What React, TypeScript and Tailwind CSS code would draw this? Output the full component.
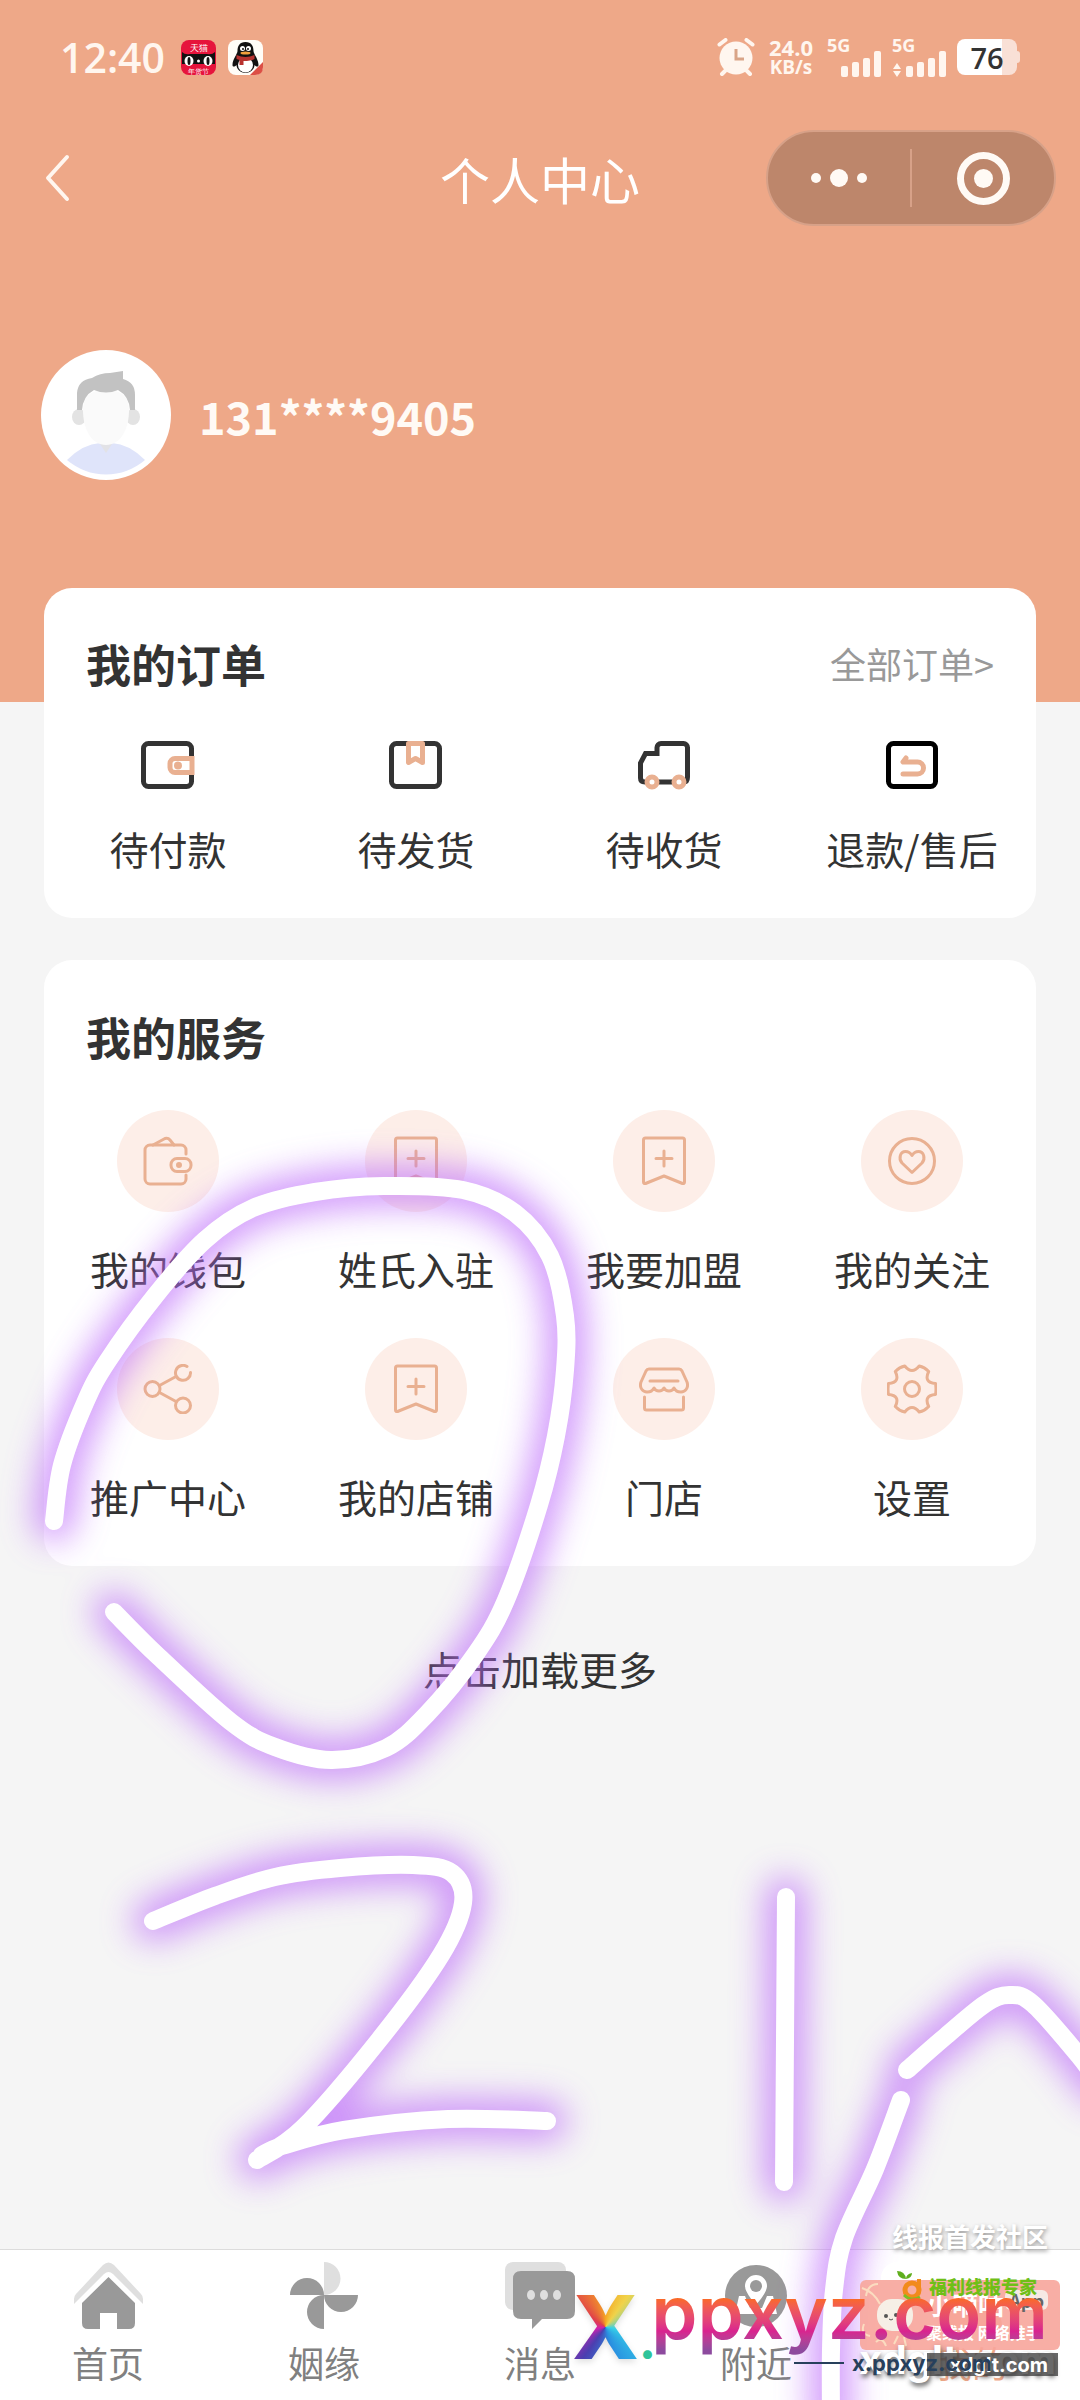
import React from "react";

interface Entry {
  label: string;
  icon: React.ReactNode;
}

const ORANGE = "#e9b091";
const DARK = "#333333";

// ---- Order icons (54x54) ----

const PayIcon = () => (
  <svg viewBox="0 0 54 54" className="size-[54px]" fill="none" strokeWidth="5" aria-hidden="true">
    <rect x="2.5" y="5.5" width="48" height="43" rx="5" stroke={DARK} />
    <path d="M51 20.5H34a5 5 0 0 0-5 5v4a5 5 0 0 0 5 5h17z" stroke={ORANGE} fill="#fff" />
    <circle cx="37" cy="27.5" r="4" fill={ORANGE} />
  </svg>
);

const ShipIcon = () => (
  <svg viewBox="0 0 54 54" className="size-[54px]" fill="none" strokeWidth="5" aria-hidden="true">
    <rect x="2.5" y="5.5" width="48" height="43" rx="5" stroke={DARK} />
    <path d="M19.5 5.5h14v19l-7-4-7 4z" stroke={ORANGE} fill="#fff" strokeLinejoin="round" />
  </svg>
);

const TruckIcon = () => (
  <svg viewBox="0 0 54 54" className="size-[54px]" fill="none" strokeWidth="5" aria-hidden="true">
    <path
      d="M8 44c-3 0-4.500-1.500-4.500-4V25l5-9.500H20V9.500a4 4 0 0 1 4-4h22.500a4 4 0 0 1 4 4V39c0 3.500-1.500 5-4 5z"
      stroke={DARK}
    />
    <circle cx="15" cy="44" r="5" fill="#fff" stroke={ORANGE} />
    <circle cx="42" cy="44" r="5" fill="#fff" stroke={ORANGE} />
  </svg>
);

const RefundIcon = () => (
  <svg viewBox="0 0 54 54" className="size-[54px]" fill="none" strokeWidth="5" aria-hidden="true">
    <rect x="3.500" y="5.5" width="47" height="43" rx="5" stroke="#000" />
    <path
      d="M21 20 18 24h14.500a6 6 0 0 1 0 12H18"
      stroke={ORANGE}
      strokeLinecap="round"
      strokeLinejoin="round"
    />
  </svg>
);

// ---- Service icons, drawn inside a peach disc ----

const Disc: React.FC<{ children: React.ReactNode }> = ({ children }) => (
  <span className="flex size-[102px] items-center justify-center rounded-full bg-[#fdeee8]">
    <svg
      viewBox="-1 -1 50 50"
      className="size-[50px]"
      fill="none"
      stroke={ORANGE}
      strokeWidth="3"
      strokeLinecap="round"
      strokeLinejoin="round"
      aria-hidden="true"
    >
      {children}
    </svg>
  </span>
);

const WalletIcon = () => (
  <Disc>
    <path d="M42 17v-4a5 5 0 0 0-5-5H6a5 5 0 0 0-5 5v29a5 5 0 0 0 5 5h31a5 5 0 0 0 5-5v-4" />
    <path d="m9 8 12-6.500q3-1 5 1.500l4 5" />
    <rect x="27" y="21.500" width="20" height="13" rx="6" />
    <circle cx="35" cy="28" r="1.500" />
  </Disc>
);

const BookmarkIcon = () => (
  <Disc>
    <path d="M5.500 1h37q2 0 2 2v42q0 2-2 1.500L24 39 5.500 46.500q-2 .5-2-1.500V3q0-2 2-2z" />
    <path d="M24 14v15M16 21.500h16" />
  </Disc>
);

const HeartIcon = () => (
  <Disc>
    <circle cx="24" cy="24" r="22.500" />
    <path d="M24 35.500 14 26c-4-5-1.500-11.500 3.500-11.500 3 0 5 1.500 6.500 4 1.500-2.500 3.500-4 6.500-4 5 0 7.500 6.500 3.500 11.500z" />
  </Disc>
);

const ShareIcon = () => (
  <Disc>
    <circle cx="8.500" cy="24" r="7.500" />
    <path d="M43 1.500a7.500 7.500 0 1 0 3.500 6" />
    <circle cx="39" cy="40.500" r="7.500" />
    <path d="m15.500 20.500 16.500-9M15.500 27.500l16.500 9" />
  </Disc>
);

const StoreIcon = () => (
  <Disc>
    <path d="M9 4h30q2 0 3 2l5 11c2 6-2 10-6 10s-5-1-7-4c-2 4-8 4-10 0-2 4-8 4-10 0-2 3-3 4-7 4S-1 23 1 17L6 6q1-2 3-2z" />
    <path d="M10 16h28M4.500 32v11q0 2 2 2h35q2 0 2-2V32" />
  </Disc>
);

const GearIcon = () => (
  <Disc>
    <g transform="translate(24 24)">
      <path d="M23.500-5.500Q24.500 0 23.500 5.500 11.300 6.500 16.700 17.500 12.500 22 7.200 23 0 14 -7.200 23-12.500 22-16.700 17.500-11.300 6.500-23.500 5.500-24.500 0-23.500-5.500-11.300-6.500-16.700-17.500-12.500-22-7.200-23 0-14 7.200-23 12.500-22 16.700-17.500 11.300-6.500 23.500-5.500z" />
      <circle r="7.500" />
    </g>
  </Disc>
);

// ---- Tab bar icons (72x72) ----

const HomeIcon = () => (
  <svg viewBox="0 0 72 72" className="size-18" aria-hidden="true">
    <path d="M2 42v-5q0-3 2-5L31 3q5.500-5 11 0l27 29q2 2 2 5v5L41 12q-4.500-4-9 0z" fill="#dfdfdf" />
    <path d="m36.500 15 26.500 26v20q0 6-6 6H45V51H28v16H16q-6 0-6-6V41z" fill="#999" />
  </svg>
);

const PinwheelIcon = () => (
  <svg viewBox="0 0 72 72" className="size-18" fill="#999" aria-hidden="true">
    <path d="M36 0a16.500 16.500 0 0 1 0 33z" fill="#dfdfdf" />
    <path d="M2 33a17 17 0 0 1 34 0zM36 33h34a17 17 0 0 1-34 0zM36 33v34a17 17 0 0 1 0-34z" />
  </svg>
);

const MessageIcon = () => (
  <svg viewBox="0 0 72 72" className="size-18" aria-hidden="true">
    <rect x="1" y="0" width="61" height="48" rx="8" fill="#dfdfdf" />
    <path d="M17 9h46q8 0 8 8v32q0 8-8 8H38L28 67V57H17q-8 0-8-8V17q0-8 8-8z" fill="#999" />
    <g fill="#dfdfdf">
      <ellipse cx="27" cy="33" rx="4" ry="5" />
      <ellipse cx="40" cy="33" rx="4" ry="5" />
      <ellipse cx="53" cy="33" rx="4" ry="5" />
    </g>
  </svg>
);

const NearbyIcon = () => (
  <svg viewBox="0 0 72 72" className="size-18" aria-hidden="true">
    <circle cx="36" cy="34" r="31" fill="#999" />
    <path d="M19 34h6l5 12h12l5-12h6l4 18H15z" fill="#fff" />
    <path d="M36 12a12 12 0 0 1 12 12c0 8-12 20-12 20S24 32 24 24a12 12 0 0 1 12-12z" fill="#fff" stroke="#999" strokeWidth="2" />
    <circle cx="36" cy="24" r="6" fill="#999" />
  </svg>
);

const MineIcon = () => (
  <svg viewBox="0 0 72 72" className="size-18" aria-hidden="true">
    <circle cx="36" cy="16" r="16" fill="#f6d5c5" />
    <path d="M6 66c0-20 13-30 30-30s30 10 30 30z" fill="#eea888" />
  </svg>
);

const orders: Entry[] = [
  { label: "待付款", icon: <PayIcon /> },
  { label: "待发货", icon: <ShipIcon /> },
  { label: "待收货", icon: <TruckIcon /> },
  { label: "退款/售后", icon: <RefundIcon /> },
];

const services: Entry[] = [
  { label: "我的钱包", icon: <WalletIcon /> },
  { label: "姓氏入驻", icon: <BookmarkIcon /> },
  { label: "我要加盟", icon: <BookmarkIcon /> },
  { label: "我的关注", icon: <HeartIcon /> },
  { label: "推广中心", icon: <ShareIcon /> },
  { label: "我的店铺", icon: <BookmarkIcon /> },
  { label: "门店", icon: <StoreIcon /> },
  { label: "设置", icon: <GearIcon /> },
];

const tabs: Entry[] = [
  { label: "首页", icon: <HomeIcon /> },
  { label: "姻缘", icon: <PinwheelIcon /> },
  { label: "消息", icon: <MessageIcon /> },
  { label: "附近", icon: <NearbyIcon /> },
  { label: "我的", icon: <MineIcon /> },
];

// ---- Status bar ----

const TmallIcon = () => (
  <svg viewBox="0 0 35 35" className="size-[35px]" aria-hidden="true">
    <rect width="35" height="35" rx="8" fill="#e6143c" />
    <path d="M1 12q3 3 8 2h17q5 1 8-2v12H1z" fill="#111" />
    <ellipse cx="8" cy="21" rx="4.500" ry="5" fill="#fff" />
    <ellipse cx="27" cy="21" rx="4.500" ry="5" fill="#fff" />
    <ellipse cx="8" cy="21" rx="1.500" ry="4" fill="#111" />
    <ellipse cx="27" cy="21" rx="1.500" ry="4" fill="#111" />
    <circle cx="17.500" cy="21" r="1.500" fill="#fff" />
    <text x="17.500" y="11" fontSize="9" textAnchor="middle" fill="#fff">天猫</text>
    <text x="17.500" y="34" fontSize="7" textAnchor="middle" fill="#fff">年货节</text>
  </svg>
);

const QQIcon = () => (
  <svg viewBox="0 0 35 35" className="size-[35px]" aria-hidden="true">
    <rect width="35" height="35" rx="8" fill="#fffdf8" />
    <path d="M17.500 2c6 0 8 4 8 9 0 3 5 8 5 14 0 2-2 2-4 0 0 4-4 8-9 8s-9-4-9-8c-2 2-4 2-4 0 0-6 5-11 5-14 0-5 2-9 8-9z" fill="#111" />
    <ellipse cx="17.500" cy="25" rx="7.500" ry="7.500" fill="#fff" />
    <circle cx="14.500" cy="8.500" r="2.500" fill="#fff" />
    <circle cx="20.500" cy="8.500" r="2.500" fill="#fff" />
    <circle cx="15" cy="9" r="1" fill="#111" />
    <circle cx="20" cy="9" r="1" fill="#111" />
    <ellipse cx="17.500" cy="13" rx="5" ry="1.500" fill="#f2a03c" />
    <path d="M8.500 15q9 4 18 0v4q-4 2-11 2v4h-4v-5l-3-1z" fill="#b8322f" />
    <path d="M22 35 35 22v5q0 8-8 8z" fill="#dc4f45" />
  </svg>
);

const AlarmIcon = () => (
  <svg viewBox="0 0 38 38" className="size-[38px]" fill="none" stroke="#fff6ef" strokeWidth="4" strokeLinecap="round" aria-hidden="true">
    <circle cx="19" cy="20" r="16.500" fill="#fff6ef" stroke="none" />
    <path d="m2.500 6.500 6-4.500M35.500 6.500l-6-4.500M5 36l3-3M33 36l-3-3" />
    <path d="M19 11v10h8" stroke="#d9a487" strokeWidth="3" strokeLinecap="butt" />
  </svg>
);

const Signal: React.FC<{ active?: boolean }> = ({ active }) => (
  <div className="flex h-[36px] w-[55px] flex-col justify-between">
    <span className="h-3 text-[18px] font-bold leading-3">5G</span>
    <svg viewBox="0 0 55 26" className="h-[26px] w-[55px] shrink-0" fill="#fff6ef" aria-hidden="true">
      {active && <path d="m5 12 4 6H1zM5 26l4-6H1z" />}
      <rect x="14" y="15" width="7" height="11" rx="2" />
      <rect x="25" y="11" width="7" height="15" rx="2" />
      <rect x="36" y="7" width="7" height="19" rx="2" />
      <rect x="47" y="0" width="7" height="26" rx="2" />
    </svg>
  </div>
);

const StatusBar = () => (
  <div className="flex h-[114px] items-center justify-between pl-[60px] pr-[60px] font-['Open_Sans',sans-serif] text-[#fff6ef]">
    <div className="flex items-center gap-3">
      <span className="mr-1 text-[41px] font-semibold leading-none">12:40</span>
      <TmallIcon />
      <QQIcon />
    </div>
    <div className="flex items-center gap-2.5">
      <AlarmIcon />
      <div className="mx-1 flex flex-col items-center text-[22px] font-bold leading-5">
        <span>24.0</span>
        <span className="text-[19px]">KB/s</span>
      </div>
      <Signal />
      <Signal active />
      <div className="flex items-center">
        <span className="flex h-9 w-15 items-center justify-center rounded-lg bg-linear-to-r from-white from-75% to-[#f9e0d6] to-75% text-[29px] font-semibold leading-none text-[#333]">
          76
        </span>
        <span className="h-3 w-[3px] rounded-r bg-[#f9e0d6]" />
      </div>
    </div>
  </div>
);

const NavBar = () => (
  <nav className="grid h-[128px] grid-cols-3 items-center px-6 text-white">
    <button type="button" aria-label="返回" className="ml-5 w-[30px]">
      <svg viewBox="0 0 30 50" className="h-[50px] w-[30px]" fill="none" stroke="#fff6ef" strokeWidth="4" strokeLinecap="round" strokeLinejoin="round">
        <path d="M23 4 4 25l19 21" />
      </svg>
    </button>
    <h1 className="whitespace-nowrap text-center text-[50px] leading-none">个人中心</h1>
    <div className="flex h-[96px] w-[290px] items-center justify-self-end rounded-full border-2 border-[#d7a188] bg-[#bd866b]">
      <button type="button" aria-label="更多" className="flex flex-1 items-center justify-center gap-[9px]">
        <span className="size-2.5 rounded-full bg-[#fffaf5]" />
        <span className="size-[18px] rounded-full bg-[#fffaf5]" />
        <span className="size-2.5 rounded-full bg-[#fffaf5]" />
      </button>
      <span className="h-[58px] w-0.5 bg-[#d7a188]" />
      <button type="button" aria-label="关闭" className="flex flex-1 items-center justify-center">
        <span className="flex size-[53px] items-center justify-center rounded-full border-[7px] border-[#fffaf5]">
          <span className="size-[19px] rounded-full bg-[#fffaf5]" />
        </span>
      </button>
    </div>
  </nav>
);

const Avatar = () => (
  <svg viewBox="0 0 130 130" className="size-[130px]" role="img" aria-label="头像">
    <circle cx="65" cy="65" r="65" fill="#fff" />
    <path d="M26 110q16-16 33-17h12q17 1 33 17a60 60 0 0 1-78 0z" fill="#dfe4fa" />
    <path d="M59 94h12l-6 9z" fill="#e2e2e6" />
    <ellipse cx="38" cy="67" rx="7" ry="8" fill="#e3e3e3" />
    <ellipse cx="92" cy="67" rx="7" ry="8" fill="#e3e3e3" />
    <path d="M42 60q0-20 23-20t23 20c0 20-9 35-23 35S42 80 42 60z" fill="#fafafa" />
    <path d="M36 60V43q1-13 15-15 8-5 18-5l13-2v8q12 3 12 16v15h-5q-1-14-12-20-12 5-24 0-11 6-12 20z" fill="#c2c2c2" />
  </svg>
);

const EntryGrid: React.FC<{ items: Entry[]; className: string }> = ({ items, className }) => (
  <div className={`grid grid-cols-4 gap-y-[42px] ${className}`}>
    {items.map((item) => (
      <button key={item.label} type="button" className="flex flex-col items-center gap-7">
        {item.icon}
        <span className="whitespace-nowrap text-[39px] leading-14">{item.label}</span>
      </button>
    ))}
  </div>
);

// ---- Hand-drawn glowing strokes that lie over the whole page ----

type Point = [number, number];

const strokes: Point[][] = [
  [
    [54, 1521], [62, 1465], [85, 1403], [107, 1362], [155, 1296], [205, 1240], [253, 1208], [315, 1192],
    [384, 1186], [463, 1190], [515, 1213], [550, 1256], [565, 1316], [565, 1370], [556, 1436], [539, 1505],
    [506, 1600], [475, 1655], [427, 1714], [386, 1748], [331, 1760], [275, 1747], [231, 1722], [158, 1656],
    [114, 1612],
  ],
  [
    [153, 1921], [215, 1896], [275, 1877], [340, 1868], [413, 1865], [452, 1873], [463, 1903], [441, 1955],
    [379, 2040], [303, 2128], [257, 2160],
  ],
  [[262, 2155], [282, 2146], [344, 2130], [448, 2119], [547, 2121]],
  [[786, 1897], [784, 2182]],
  [[907, 2070], [946, 2036], [985, 2004], [1009, 1995], [1033, 2004], [1080, 2057], [1100, 2085]],
  [[901, 2100], [875, 2169], [844, 2238], [834, 2290], [831, 2350], [831, 2420]],
];

// Catmull-Rom spline through the points, as cubic Béziers
function smoothPath(points: Point[]): string {
  let d = `M${points[0][0]} ${points[0][1]}`;
  for (let i = 0; i < points.length - 1; i++) {
    const p0 = points[i - 1] ?? points[i];
    const p1 = points[i];
    const p2 = points[i + 1];
    const p3 = points[i + 2] ?? p2;
    d += `C${p1[0] + (p2[0] - p0[0]) / 6} ${p1[1] + (p2[1] - p0[1]) / 6}`;
    d += ` ${p2[0] - (p3[0] - p1[0]) / 6} ${p2[1] - (p3[1] - p1[1]) / 6}`;
    d += ` ${p2[0]} ${p2[1]}`;
  }
  return d;
}

const doodlePath = strokes.map(smoothPath).join("");

const Doodle = () => (
  <svg
    viewBox="0 0 1080 2400"
    className="pointer-events-none absolute inset-0 size-full"
    fill="none"
    strokeLinecap="round"
    strokeLinejoin="round"
    aria-hidden="true"
  >
    <filter id="glow" x="-20%" y="-20%" width="140%" height="140%">
      <feGaussianBlur stdDeviation="17" />
    </filter>
    <path d={doodlePath} stroke="#bd6cfa" strokeWidth="40" filter="url(#glow)" opacity="0.72" />
    <path d={doodlePath} stroke="#fff" strokeWidth="18" />
  </svg>
);

// Stamps of the forum sites, stacked in the bottom right corner
const Stamps = () => (
  <div className="pointer-events-none absolute bottom-0 right-0 h-[180px] w-[520px]">
    <p className="absolute right-[32px] top-[-2px] text-[26px] font-bold leading-9 text-white [text-shadow:1px_2px_4px_#999]">
      线报首发社区
    </p>
    <div className="absolute right-[24px] top-[42px] h-10 w-[175px] rounded-2xl bg-white" />
    <div className="absolute right-[20px] top-[60px] h-[70px] w-[200px] rounded-md bg-[#f7a59b]/90">
      <svg viewBox="0 0 200 70" className="size-full" fill="none" aria-hidden="true">
        <path d="M6 16q2-12 12-12M2 8q12 4 18 16M4 44q-4 10 6 12M16 62q6-6 10 4M34 64l4-8M46 66l-2-9" stroke="#fbdcc0" strokeWidth="2" />
        <rect x="17" y="19" width="36" height="32" rx="15" fill="#f6efe6" />
        <circle cx="26" cy="36" r="2" fill="#555" />
        <circle cx="36" cy="35" r="2" fill="#555" />
        <path d="M29 39q2 2 4 0" stroke="#555" />
      </svg>
      <span className="absolute left-[66px] top-2.5 text-[26px] font-bold leading-7 text-white">小嘀咕</span>
      <span className="absolute right-3 top-2.5 rounded-md bg-[#f6e9e4] px-1 text-[18px] font-bold leading-5 text-[#666]">
        App
      </span>
      <span className="absolute left-[66px] top-10 whitespace-nowrap text-[16px] font-bold leading-6 text-white">
        聚线报 网络推手
      </span>
    </div>
    <div className="absolute right-[43px] top-[51px] flex items-center gap-1">
      <svg viewBox="0 0 28 30" className="h-[30px] w-7" fill="none" aria-hidden="true">
        <path d="M0 0q8 0 9 8-8 0-9-8zM9 8q0-5 6-6 0 5-6 6z" fill="#5fae1e" />
        <circle cx="15" cy="19" r="7" stroke="#f28a1c" strokeWidth="5" />
        <path d="M22 8v12" stroke="#f28a1c" strokeWidth="4" />
        <path d="M7 24q7 7 16 2" stroke="#7cbf22" strokeWidth="3" />
      </svg>
      <span className="text-[18px] font-black leading-5 text-[#6fbf17]">福利线报专家</span>
    </div>
    <p className="absolute right-[24px] top-[116px] font-['Inter',sans-serif] text-[40px] font-bold leading-12 text-white [text-shadow:1px_3px_5px_#555]">
      xdglt.com
    </p>
    <div className="absolute right-[22px] top-[133px] flex h-[23px] w-[131px] items-center justify-end bg-[#444]/80 pr-2.5 font-['Inter',sans-serif] text-[20px] font-bold text-white">
      xdglt.com
    </div>
    <div className="absolute right-[32px] top-[131px] flex items-center gap-2 font-['Inter',sans-serif] text-[22px] font-bold leading-6 text-[#27405c]">
      <span className="h-0.5 w-[50px] bg-[#27405c]" />
      <span className="w-[196px]">x.ppxyz.com</span>
    </div>
    <p className="absolute right-[424px] top-[59px] font-['Inter',sans-serif] font-extrabold leading-[96px]">
      <span className="bg-conic-[from_0deg_at_50%_50%,#f5a623,#f0d34a_10%,#35d0e8_28%,#2a8fe0_45%,#4b3fb0_60%,#d01fae_72%,#e0404a_85%,#f5a623] bg-clip-text text-[88px] text-transparent drop-shadow-md">
        X
      </span>
      <span className="text-[48px] text-[#2fc49a]">.</span>
    </p>
    <p className="absolute right-[32px] top-[44px] bg-linear-to-b from-[#fb6b1c] from-35% via-[#d9238f] via-70% to-[#8d4a9e] to-90% bg-clip-text font-['Inter',sans-serif] text-[74px] font-semibold leading-[96px] text-transparent">
      ppxyz.com
    </p>
  </div>
);

export default function App() {
  return (
    <div className="relative flex min-h-screen flex-col overflow-hidden bg-[#f5f5f5] font-['Noto_Sans_CJK_SC',sans-serif] text-[#333]">
      <header className="bg-[#eea888]">
        <StatusBar />
        <NavBar />
        <div className="flex items-center gap-7 px-[41px] pb-[222px] pt-[108px]">
          <Avatar />
          <span className="text-[45px] font-bold leading-none text-[#fffaf5]">131****9405</span>
        </div>
      </header>

      <main className="mx-11 -mt-[114px] flex flex-col">
        <section className="rounded-[28px] bg-white pb-[42px] pt-[51px]">
          <div className="flex h-12 items-center justify-between px-[42px]">
            <h2 className="text-[45px] font-bold leading-none">我的订单</h2>
            <a href="#orders" className="text-[36px] leading-none text-[#999]">
              全部订单&gt;
            </a>
          </div>
          <EntryGrid items={orders} className="mt-[51px]" />
        </section>

        <section className="mt-[42px] rounded-[28px] bg-white pb-[42px] pt-[53px]">
          <h2 className="px-[42px] text-[45px] font-bold leading-12">我的服务</h2>
          <EntryGrid items={services} className="mt-[49px]" />
        </section>

        <button type="button" className="mt-[74px] self-center text-[39px] leading-14">
          点击加载更多
        </button>
      </main>

      <footer className="mt-auto grid grid-cols-5 border-t border-[#dcdcdc] bg-white pb-4 pt-3">
        {tabs.map((tab) => (
          <a
            key={tab.label}
            href="#tab"
            className="flex flex-col items-center gap-1.5 text-[36px] leading-11 text-[#808080] last:text-[#eea888]"
          >
            {tab.icon}
            {tab.label}
          </a>
        ))}
      </footer>

      <Doodle />
      <Stamps />
    </div>
  );
}
